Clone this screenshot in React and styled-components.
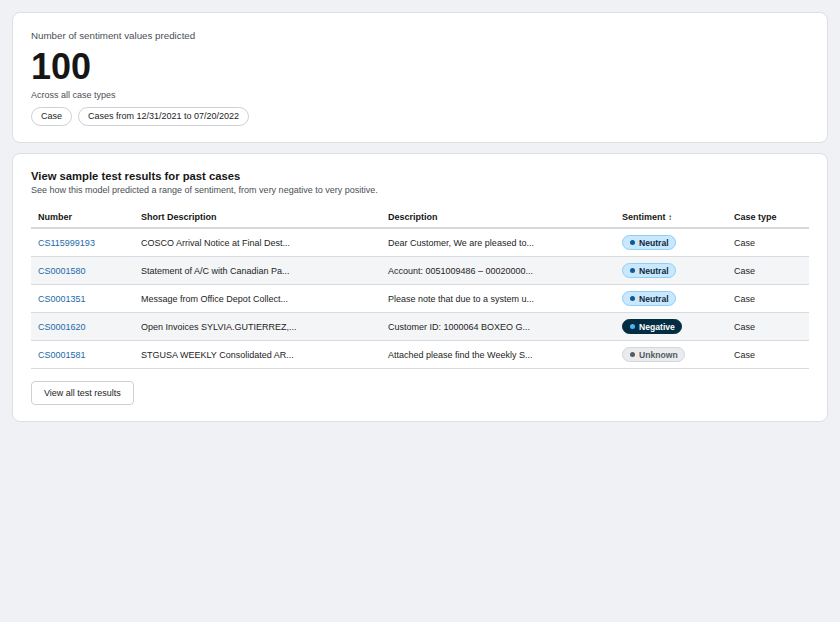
import React from 'react'
import styled, { createGlobalStyle } from 'styled-components';

const rows = [
    { number: 'CS115999193', short: 'COSCO Arrival Notice at Final Dest...', desc: 'Dear Customer, We are pleased to...', sentiment: 'neutral', label: 'Neutral' },
    { number: 'CS0001580', short: 'Statement of A/C with Canadian Pa...', desc: 'Account: 0051009486 \u2013 00020000...', sentiment: 'neutral', label: 'Neutral' },
    { number: 'CS0001351', short: 'Message from Office Depot Collect...', desc: 'Please note that due to a system u...', sentiment: 'neutral', label: 'Neutral' },
    { number: 'CS0001620', short: 'Open Invoices SYLVIA.GUTIERREZ,...', desc: 'Customer ID: 1000064 BOXEO G...', sentiment: 'negative', label: 'Negative' },
    { number: 'CS0001581', short: 'STGUSA WEEKLY Consolidated AR...', desc: 'Attached please find the Weekly S...', sentiment: 'unknown', label: 'Unknown' },
]

export default function App() {
    return (
        <>
            <GlobalStyle />
            <Page>
                <Card>
                    <Label>Number of sentiment values predicted</Label>
                    <BigNumber>100</BigNumber>
                    <Caption>Across all case types</Caption>
                    <Chips>
                        <Chip>Case</Chip>
                        <Chip>Cases from 12/31/2021 to 07/20/2022</Chip>
                    </Chips>
                </Card>
                <Card>
                    <Title>View sample test results for past cases</Title>
                    <Subtitle>See how this model predicted a range of sentiment, from very negative to very positive.</Subtitle>
                    <Table>
                        <colgroup>
                            <col style={{ width: 103 }} />
                            <col style={{ width: 247 }} />
                            <col style={{ width: 234 }} />
                            <col style={{ width: 112 }} />
                            <col />
                        </colgroup>
                        <thead>
                            <tr>
                                <Th>Number</Th>
                                <Th>Short Description</Th>
                                <Th>Description</Th>
                                <Th>Sentiment <SortMark>&#8597;</SortMark></Th>
                                <Th>Case type</Th>
                            </tr>
                        </thead>
                        <tbody>
                            {rows.map((r, i) => (
                                <Tr key={r.number} $striped={i % 2 === 1}>
                                    <Td><Link>{r.number}</Link></Td>
                                    <Td>{r.short}</Td>
                                    <Td>{r.desc}</Td>
                                    <Td>
                                        <Badge $kind={r.sentiment}>
                                            <Dot $kind={r.sentiment} />
                                            {r.label}
                                        </Badge>
                                    </Td>
                                    <Td>Case</Td>
                                </Tr>
                            ))}
                        </tbody>
                    </Table>
                    <Button>View all test results</Button>
                </Card>
            </Page>
        </>
    )
}

const badgeColors = {
    neutral: { bg: '#c9e8fd', border: '#8ccff7', dot: '#0f5a92', text: '#0c2840' },
    negative: { bg: '#032d42', border: '#032d42', dot: '#4fb2f5', text: '#ffffff' },
    unknown: { bg: '#e9ebee', border: '#d3d6da', dot: '#555b61', text: '#555b61' },
}

const GlobalStyle = createGlobalStyle`
    body {
        margin: 0;
        background: #f0f1f4;
        font-family: "Liberation Sans", Arial, sans-serif;
        color: #1d1d1d;
    }
`;

const Page = styled.div`
    padding: 12px;
    display: flex;
    flex-direction: column;
    gap: 10px;
`;

const Card = styled.div`
    background: #fff;
    border: 1px solid #dcdfe3;
    border-radius: 8px;
    padding: 16px 18px;
    display: flex;
    flex-direction: column;
    align-items: flex-start;
`;

const Label = styled.div`
    font-size: 9.75px;
    line-height: 14px;
    color: #4a4f55;
`;

const BigNumber = styled.div`
    font-size: 36px;
    font-weight: 700;
    color: #161616;
    line-height: 42px;
    margin-top: 3px;
`;

const Caption = styled.div`
    font-size: 9px;
    line-height: 12px;
    color: #4a4f55;
    margin-top: 1px;
`;

const Chips = styled.div`
    display: flex;
    gap: 6px;
    margin-top: 6px;
`;

const Chip = styled.div`
    font-size: 9px;
    border: 1px solid #cdd1d5;
    border-radius: 10px;
    padding: 0 9px;
    height: 17px;
    line-height: 17px;
    color: #1d1d1d;
`;

const Title = styled.div`
    font-size: 11.25px;
    line-height: 13px;
    font-weight: 700;
    color: #161616;
`;

const Subtitle = styled.div`
    font-size: 9px;
    line-height: 11px;
    color: #4a4f55;
    margin-top: 2px;
`;

const Table = styled.table`
    width: 100%;
    border-collapse: collapse;
    margin-top: 11px;
    font-size: 9px;
    table-layout: fixed;
`;

const Th = styled.th`
    text-align: left;
    font-weight: 700;
    color: #161616;
    padding: 0 7px;
    height: 20px;
    border-bottom: 2px solid #d4d7db;
`;

const SortMark = styled.span`
    font-weight: 400;
    font-size: 8px;
`;

const Tr = styled.tr`
    background: ${props => props.$striped ? '#f4f5f7' : '#fff'};
`;

const Td = styled.td`
    padding: 0 7px;
    height: 27px;
    border-bottom: 1px solid #d8dbdf;
    color: #1d1d1d;
    white-space: nowrap;
`;

const Link = styled.span`
    color: #1a6aa8;
`;

const Badge = styled.span`
    display: inline-flex;
    align-items: center;
    gap: 4px;
    height: 13px;
    padding: 0 6px 0 7px;
    border-radius: 8px;
    font-size: 8.6px;
    font-weight: 700;
    background: ${props => badgeColors[props.$kind].bg};
    border: 1px solid ${props => badgeColors[props.$kind].border};
    color: ${props => badgeColors[props.$kind].text};
`;

const Dot = styled.span`
    width: 5px;
    height: 5px;
    border-radius: 50%;
    background: ${props => badgeColors[props.$kind].dot};
`;

const Button = styled.button`
    margin-top: 12px;
    font-family: inherit;
    font-size: 9px;
    color: #1d1d1d;
    background: #fff;
    border: 1px solid #cdd1d5;
    border-radius: 4px;
    height: 24px;
    padding: 0 12px;
`;
